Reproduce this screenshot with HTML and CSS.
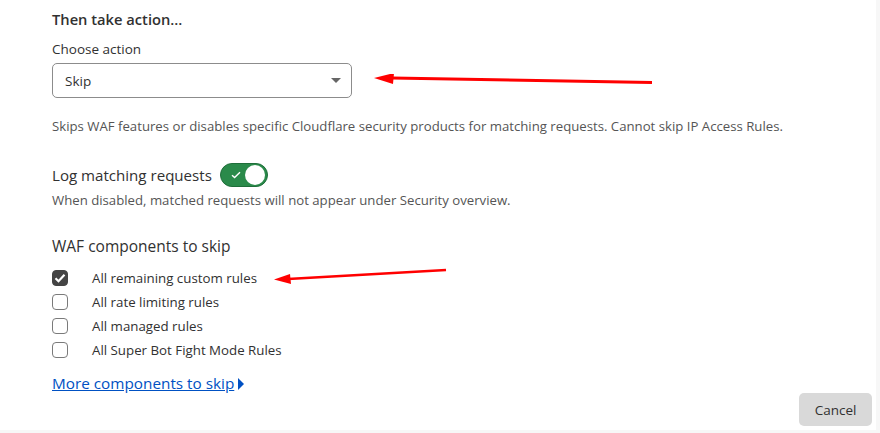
FILE: index.html
```html
<!DOCTYPE html>
<html lang="en">
<head>
    <meta charset="UTF-8">
    <title>Then take action</title>
    <link rel="stylesheet" href="styles.css">
</head>
<body>
    <div class="panel">
        <h3 class="section-title">Then take action...</h3>

        <label class="field-label" for="action">Choose action</label>
        <div class="select">
            <span>Skip</span>
            <span class="caret"></span>
        </div>
        <p class="hint">Skips WAF features or disables specific Cloudflare security products for matching requests. Cannot skip IP Access Rules.</p>

        <div class="toggle-row">
            <span class="toggle-label">Log matching requests</span>
            <span class="toggle">
                <svg class="tick" width="10" height="8" viewBox="0 0 10 8"><path d="M1 4.2l2.6 2.4L9 1.2" fill="none" stroke="#fff" stroke-width="1.4"/></svg>
                <span class="knob"></span>
            </span>
        </div>
        <p class="hint small">When disabled, matched requests will not appear under Security overview.</p>

        <h4 class="group-title">WAF components to skip</h4>
        <ul class="checks">
            <li><span class="box checked"><svg width="12" height="10" viewBox="0 0 12 10"><path d="M1.5 5.2l3 3L10.5 1.8" fill="none" stroke="#fff" stroke-width="2.2"/></svg></span>All remaining custom rules</li>
            <li><span class="box"></span>All rate limiting rules</li>
            <li><span class="box"></span>All managed rules</li>
            <li><span class="box"></span>All Super Bot Fight Mode Rules</li>
        </ul>

        <a class="more" href="#">More components to skip</a><span class="more-caret"></span>

        <div class="footer">
            <button class="cancel">Cancel</button>
        </div>

        <!-- red annotation arrows -->
        <svg class="arrow arrow-one" width="290" height="14" viewBox="0 0 290 14"><path d="M278 8.5L18 4" stroke="#f00" stroke-width="3"/><path d="M0 4L20 -1L19 10Z" fill="#f00"/></svg>
        <svg class="arrow arrow-two" width="180" height="16" viewBox="0 0 180 16"><path d="M172 2L14 11" stroke="#f00" stroke-width="2.6"/><path d="M0 11.5L16 6L17 16Z" fill="#f00"/></svg>
    </div>
</body>
</html>
```

FILE: styles.css
```css
* {
    box-sizing: border-box;
    margin: 0;
    padding: 0;
}
html, body {
    width: 880px;
    height: 433px;
    overflow: hidden;
}
body {
    background-color: #f7f7f7;
    font-family: "Open Sans", "Noto Sans", sans-serif;
    color: #313131;
}
.panel {
    position: relative;
    width: 876px;
    height: 430px;
    background-color: #fff;
    padding: 9px 0 0 52px;
}
.section-title {
    font-size: 14.7px;
    font-weight: 600;
    line-height: 20px;
}
.field-label {
    display: block;
    margin-top: 11px;
    font-size: 13.5px;
    line-height: 18px;
}
.select {
    display: flex;
    align-items: center;
    justify-content: space-between;
    width: 300px;
    height: 35px;
    margin-top: 5px;
    padding: 0 8px 0 12px;
    border: 1px solid #8c8c8c;
    border-radius: 5px;
    font-size: 13.5px;
}
.caret {
    width: 0;
    height: 0;
    border-left: 5px solid transparent;
    border-right: 5px solid transparent;
    border-top: 5px solid #666;
    margin-right: 2px;
}
.hint {
    margin-top: 19px;
    font-size: 13.2px;
    line-height: 18px;
    color: #555;
}
.hint.small {
    margin-top: 4px;
}
.toggle-row {
    display: flex;
    align-items: center;
    margin-top: 28px;
}
.toggle-label {
    font-size: 15.1px;
    line-height: 24px;
}
.toggle {
    display: inline-flex;
    align-items: center;
    justify-content: space-between;
    width: 48px;
    height: 24px;
    margin-left: 8px;
    padding: 0 2px 0 10px;
    background-color: #2a8a4a;
    border: 1px solid #1f6e3a;
    border-radius: 12px;
}
.knob {
    width: 20px;
    height: 20px;
    border-radius: 50%;
    background-color: #fff;
}
.group-title {
    margin-top: 26px;
    font-size: 15.5px;
    font-weight: 400;
    line-height: 22px;
}
.checks {
    list-style: none;
    margin-top: 9px;
}
.checks li {
    display: flex;
    align-items: center;
    height: 24px;
    font-size: 13.3px;
}
.box {
    display: inline-flex;
    align-items: center;
    justify-content: center;
    width: 16px;
    height: 16px;
    margin-right: 24px;
    border: 1px solid #7a7a7a;
    border-radius: 4px;
}
.box.checked {
    background-color: #444;
    border-color: #444;
}
.more {
    display: inline-block;
    margin-top: 10px;
    font-size: 15.3px;
    line-height: 22px;
    color: #0051c3;
    text-decoration: underline;
}
.more-caret {
    display: inline-block;
    margin-left: 4px;
    border-top: 6px solid transparent;
    border-bottom: 6px solid transparent;
    border-left: 6px solid #0051c3;
    vertical-align: -1px;
}
.footer {
    display: flex;
    justify-content: flex-end;
    margin-top: -1px;
    padding-right: 4px;
}
.cancel {
    width: 73px;
    height: 33px;
    background-color: #d9d9d9;
    border: none;
    border-radius: 5px;
    font-family: inherit;
    font-size: 13.5px;
    color: #313131;
}
.arrow {
    position: absolute;
}
.arrow-one {
    left: 374px;
    top: 74px;
}
.arrow-two {
    left: 274px;
    top: 268px;
}
```
